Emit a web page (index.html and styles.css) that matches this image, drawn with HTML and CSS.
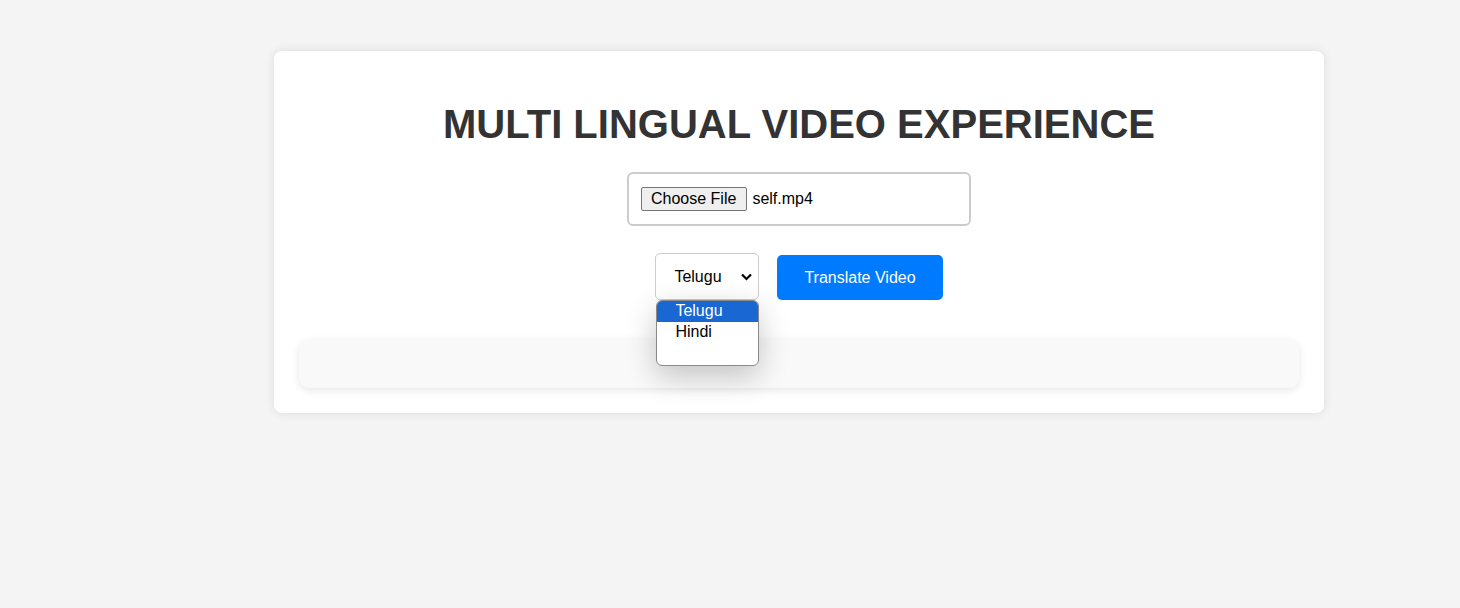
FILE: index.html
```html
<!DOCTYPE html>
<html lang="en">
<head>
<meta charset="utf-8">
<title>Multi Lingual Video Experience</title>
<link rel="stylesheet" href="styles.css">
</head>
<body>
<div class="container">
  <h1 class="title">MULTI LINGUAL VIDEO EXPERIENCE</h1>
  <div class="upload">
    <span class="file-btn">Choose File</span>
    <span class="file-name">self.mp4</span>
  </div>
  <div class="controls">
    <div class="select-wrap">
      <select class="lang">
        <option>Telugu</option>
        <option>Hindi</option>
      </select>
      <svg class="chev" width="11" height="8" viewBox="0 0 11 8"><path d="M1 1.5 L5.5 6 L10 1.5" fill="none" stroke="#000" stroke-width="2.2"/></svg>
      <div class="dropdown">
        <div class="opt opt-active">Telugu</div>
        <div class="opt">Hindi</div>
      </div>
    </div>
    <button class="translate">Translate Video</button>
  </div>
  <div class="result"></div>
</div>
</body>
</html>
```

FILE: styles.css
```css
html, body {
  margin: 0;
  padding: 0;
  background: #f4f4f4;
  font-family: "Liberation Sans", Arial, sans-serif;
}
body {
  padding: 51px 0 0 274px;
  height: 608px;
  box-sizing: border-box;
}
.container {
  width: 1050px;
  box-sizing: border-box;
  background: #fff;
  border-radius: 8px;
  padding: 50px 25px 25px;
  box-shadow: 0 0 10px rgba(0,0,0,0.1);
  display: flex;
  flex-direction: column;
  align-items: center;
}
.title {
  margin: 0;
  font-size: 40px;
  line-height: 46px;
  font-weight: bold;
  color: #333;
}
.upload {
  margin-top: 25px;
  width: 344px;
  height: 54px;
  box-sizing: border-box;
  border: 2px solid #ccc;
  border-radius: 6px;
  padding: 0 12px;
  display: flex;
  align-items: center;
  font-size: 16px;
  color: #000;
}
.file-btn {
  display: inline-block;
  height: 24px;
  line-height: 22px;
  box-sizing: border-box;
  padding: 0 10px 0 9px;
  border: 1px solid #767676;
  border-radius: 2px;
  background: #efefef;
  font-size: 16px;
  color: #000;
}
.file-name {
  margin-left: 5px;
}
.controls {
  margin-top: 27px;
  display: flex;
  align-items: flex-end;
  gap: 18px;
}
.select-wrap {
  position: relative;
  width: 104px;
  height: 47px;
}
.lang {
  appearance: none;
  -webkit-appearance: none;
  width: 104px;
  height: 47px;
  box-sizing: border-box;
  border: 1px solid #ccc;
  border-radius: 5px;
  background: #fff;
  padding: 0 0 0 18px;
  font-family: "Liberation Sans", Arial, sans-serif;
  font-size: 16px;
  color: #000;
}
.chev {
  position: absolute;
  left: 86px;
  top: 20px;
}
.dropdown {
  position: absolute;
  left: 1px;
  top: 47px;
  width: 103px;
  height: 66px;
  box-sizing: border-box;
  border: 1px solid #8a8a8a;
  border-radius: 6px;
  background: #fff;
  overflow: hidden;
  box-shadow: 0 10px 30px rgba(0,0,0,0.22);
  z-index: 10;
  font-size: 16px;
}
.opt {
  height: 21px;
  line-height: 20px;
  padding-left: 18px;
  color: #000;
}
.opt-active {
  background: #1967d2;
  color: #fff;
}
.translate {
  height: 45px;
  padding: 0 27px;
  border: none;
  border-radius: 5px;
  background: #007bff;
  color: #fff;
  font-family: "Liberation Sans", Arial, sans-serif;
  font-size: 16px;
}
.result {
  margin-top: 40px;
  width: 1000px;
  height: 48px;
  background: #f9f9f9;
  border-radius: 10px;
  box-shadow: 0 2px 8px rgba(0,0,0,0.1);
}
```
